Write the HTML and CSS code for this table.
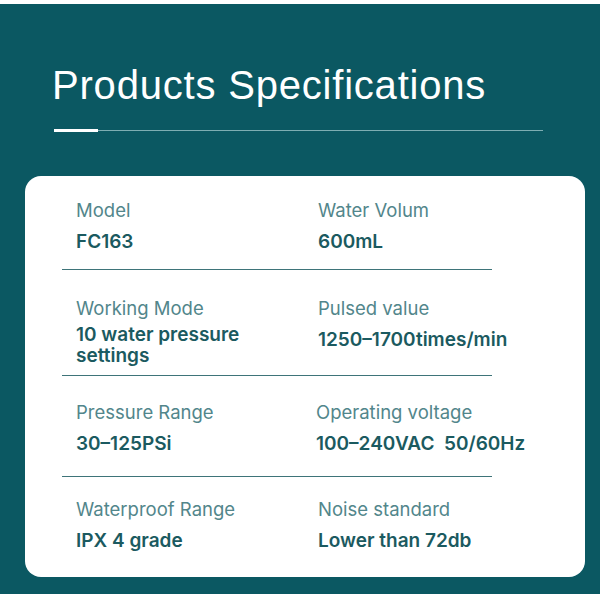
FILE: index.html
```html
<!DOCTYPE html>
<html>
<head>
<meta charset="utf-8">
<link rel="stylesheet" href="styles.css">
</head>
<body>
<div class="page">
  <header class="head">
    <h1 class="title">Products Specifications</h1>
    <div class="rule"><span class="rule-mark"></span></div>
  </header>
  <section class="card">
    <div class="specs">
      <div class="row row-1">
        <div class="cell"><div class="label">Model</div><div class="value">FC163</div></div>
        <div class="cell"><div class="label">Water Volum</div><div class="value">600mL</div></div>
      </div>
      <div class="row row-2">
        <div class="cell"><div class="label">Working Mode</div><div class="value multi">10 water pressure<br>settings</div></div>
        <div class="cell"><div class="label">Pulsed value</div><div class="value">1250–1700times/min</div></div>
      </div>
      <div class="row row-3">
        <div class="cell"><div class="label">Pressure Range</div><div class="value">30–125PSi</div></div>
        <div class="cell shift"><div class="label">Operating voltage</div><div class="value">100–240VAC&nbsp;&nbsp;50/60Hz</div></div>
      </div>
      <div class="row row-4">
        <div class="cell"><div class="label">Waterproof Range</div><div class="value">IPX 4 grade</div></div>
        <div class="cell"><div class="label">Noise standard</div><div class="value">Lower than 72db</div></div>
      </div>
    </div>
  </section>
</div>
</body>
</html>
```
FILE: styles.css
```css
html, body {
  margin: 0;
  padding: 0;
  background: #ffffff;
}
body {
  font-family: "Liberation Sans", Arial, sans-serif;
}
.page {
  margin-top: 4px;
  height: 590px;
  background: #0b5862;
  padding: 1px 0 0 0;
  box-sizing: border-box;
}
.head {
  padding: 0 0 0 52px;
}
.title {
  margin: 57px 0 0 0;
  font-size: 40px;
  line-height: 46px;
  font-weight: 400;
  color: #ffffff;
  letter-spacing: 0.8px;
}
.rule {
  margin-top: 22px;
  margin-left: 2px;
  width: 489px;
  height: 1px;
  background: #7eaeb3;
  position: relative;
}
.rule-mark {
  position: absolute;
  left: 0;
  top: -1px;
  width: 44px;
  height: 3px;
  background: #ffffff;
}
.card {
  margin: 45px 15px 0 25px;
  height: 401px;
  background: #ffffff;
  border-radius: 16px;
}
.specs {
  margin-left: 37px;
  width: 430px;
}
.row {
  display: grid;
  grid-template-columns: 242px 1fr;
  padding-left: 14px;
  border-bottom: 1px solid #3e7479;
}
.row-1 { padding-top: 22px; padding-bottom: 17px; }
.row-2 { padding-top: 26px; padding-bottom: 9px; }
.row-3 { padding-top: 24px; padding-bottom: 22px; }
.row-4 { padding-top: 20px; padding-bottom: 0; border-bottom: none; }
.cell.shift { margin-left: -2px; }
.label {
  font-family: Inter, "Liberation Sans", sans-serif;
  font-size: 18.5px;
  line-height: 24px;
  font-weight: 400;
  color: #52868b;
  white-space: nowrap;
}
.value {
  margin-top: 10px;
  font-family: Inter, "Liberation Sans", sans-serif;
  font-size: 19px;
  line-height: 20px;
  font-weight: 600;
  color: #1b5a60;
  white-space: nowrap;
}
.value.multi {
  margin-top: 4px;
  line-height: 21px;
}
```
